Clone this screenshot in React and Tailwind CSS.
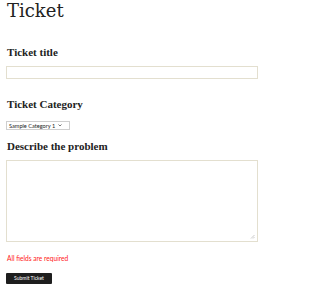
export default function App() {
  return (
    <div className="w-[268px] h-[300px] bg-white pl-[6px] pr-[10px] overflow-hidden">
      <h1 className="mt-[2px] font-['DejaVu_Serif',serif] text-[18px] leading-[18px] text-[#222] pl-[1px]">Ticket</h1>
      <h2 className="mt-[26.5px] font-['Liberation_Serif',serif] font-bold text-[11px] leading-[11px] text-[#222] pl-[1px]">Ticket title</h2>
      <div className="mt-[8.5px] h-[13px] w-[252px] border border-[#e3dfcf] bg-white"></div>
      <h2 className="mt-[20px] font-['Liberation_Serif',serif] font-bold text-[11px] leading-[11px] text-[#222] pl-[1px]">Ticket Category</h2>
      <div className="mt-[11px] h-[9px] w-[64px] border border-[#cfcfcf] bg-white flex items-center px-[2px] font-['Lato',sans-serif] text-[5.6px] leading-none text-[#222]">
        <span className="whitespace-nowrap">Sample Category 1</span>
        <svg className="ml-[3px]" width="4" height="3" viewBox="0 0 4 3"><path d="M0.5 0.5 L2 2 L3.5 0.5" fill="none" stroke="#444" strokeWidth="0.7" /></svg>
      </div>
      <h2 className="mt-[11px] font-['Liberation_Serif',serif] font-bold text-[11px] leading-[11px] text-[#222] pl-[1px]">Describe the problem</h2>
      <div className="mt-[8px] h-[82px] w-[252px] border border-[#e3dfcf] bg-white relative">
        <svg className="absolute right-[2px] bottom-[2px]" width="5" height="5" viewBox="0 0 5 5"><path d="M1 4.5 L4.5 1 M3 4.5 L4.5 3" stroke="#aaa" strokeWidth="0.6" /></svg>
      </div>
      <p className="mt-[12.5px] pl-[1px] font-['Lato',sans-serif] text-[6.6px] leading-[7px] text-[#ff2020]">All fields are required</p>
      <div className="mt-[11px] w-[46px] h-[11px] bg-[#1e1e1e] rounded-[1px] flex items-center justify-center font-['Lato',sans-serif] text-[5px] leading-none text-white">Submit Ticket</div>
    </div>
  );
}
